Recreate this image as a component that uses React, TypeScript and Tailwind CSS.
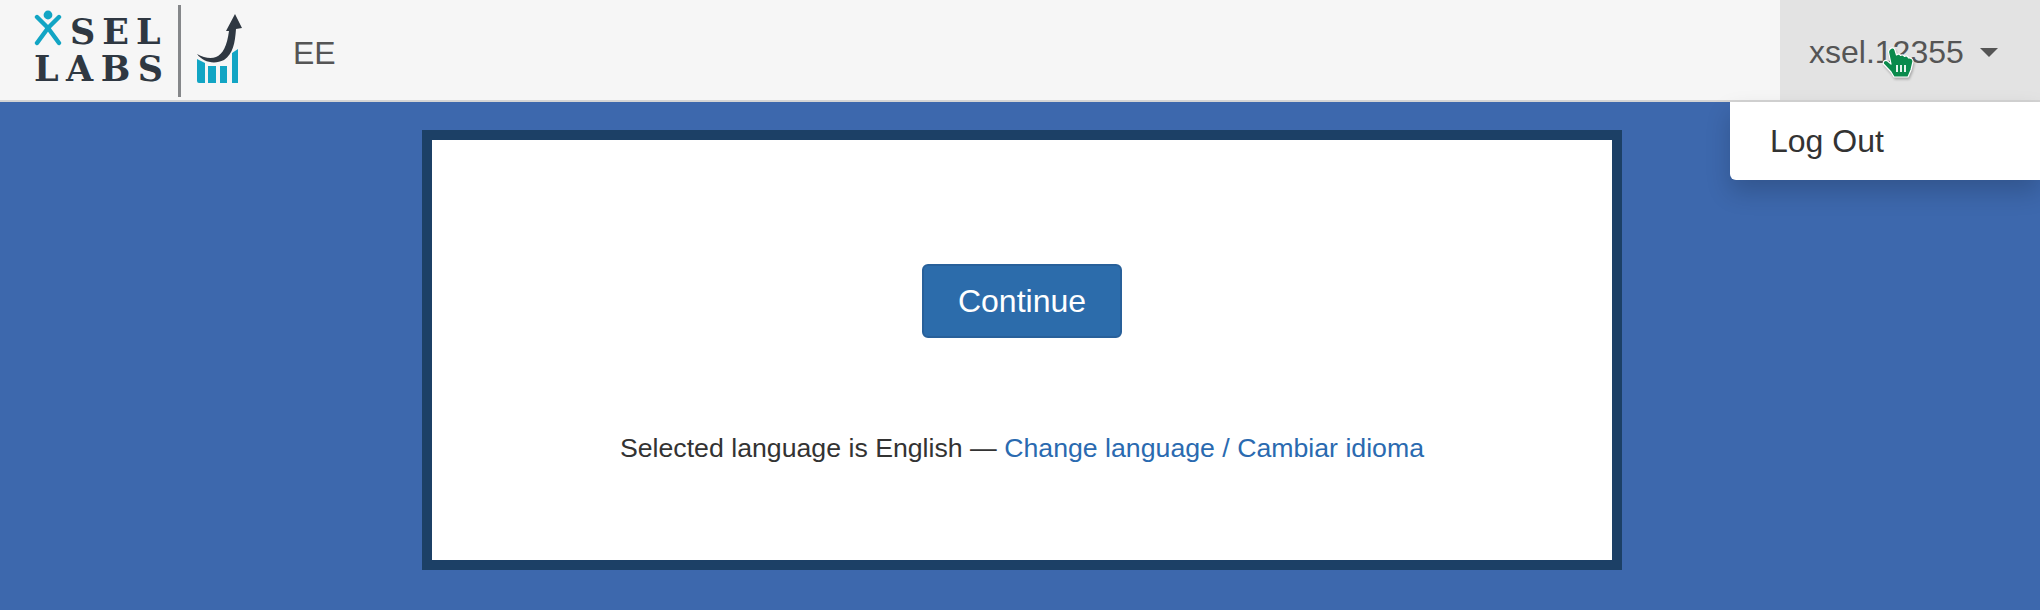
import React from "react";

const sans = "font-['Liberation_Sans',Arial,sans-serif]";

const Logo = () => (
  <div className="flex items-center h-full">
    <div className="flex flex-col w-[144px] ml-[34px] text-[#2f3842] font-['DejaVu_Serif',serif]">
      <div className="flex items-center h-[38px]">
        {/* little figure that doubles as the X */}
        <svg width="28" height="36" viewBox="0 0 28 36" className="mr-[8px] -mt-[7px] shrink-0">
          <circle cx="14" cy="5" r="4.4" fill="#12a5c4" />
          <path d="M3 7 L14 18 L25 7 M14 18 L3 33 M14 18 L25 33" fill="none" stroke="#12a5c4" strokeWidth="4.4" strokeLinecap="round" strokeLinejoin="round" />
        </svg>
        <span className="text-[35px] leading-none tracking-[7px] font-bold">SEL</span>
      </div>
      <span className="text-[35px] leading-[38px] tracking-[7.5px] font-bold">LABS</span>
    </div>
    <div className="w-[3px] h-[92px] bg-[#85878a] mt-[2px]" />
    <svg width="46" height="72" viewBox="0 0 46 72" className="ml-[16px] -mt-[3px]">
      <path d="M0 46 V68 a2 2 0 0 0 2 2 H8 V50 Z M11 53 V70 H19 V53 Z M23 53 V70 H30 V53 Z M35 40 V70 H41 V36 Z" fill="#12a5c4" />
      <path
        d="M0 41 C7 45 14 46 19 44 C26 41 30 33 32 18 L29 18 L38 1 L45 15 L39 16 C38 30 36 41 27 47 C17 52 6 49 0 41Z"
        fill="#2f3842"
        stroke="#f6f6f6"
        strokeWidth="2.5"
        paintOrder="stroke"
      />
    </svg>
  </div>
);

const HandCursor = () => (
  <svg width="32" height="32" viewBox="0 0 32 32" className="absolute left-[102px] top-[46px] drop-shadow-[1px_2px_1px_rgba(0,0,0,0.25)]">
    <path
      d="M8 3 C10 1 12.5 2 13 4 L14.5 9 C16 7.5 18 8 18.5 9.5 C20 8.5 22 9 22.5 10.5 C24 9.5 26 10 26.5 12 C28.5 11.5 31 13 31 15.5 L29 24 L26 31 L12 31 L9 26 L1.5 18 C0.5 15.5 3 13.5 5.5 15 L9 18 L6.5 6 C6.5 5 7 4 8 3Z"
      fill="#0a8a4c"
      stroke="#ffffff"
      strokeWidth="1.2"
      strokeLinejoin="round"
    />
    <path d="M15 19 V26 M19 19 V26 M23 19 V26" stroke="#ffffff" strokeWidth="1.8" fill="none" />
  </svg>
);

export default function App() {
  return (
    <div className={`h-[610px] overflow-hidden bg-[#3d68ad] ${sans}`}>
      <nav className="relative z-10 flex justify-between h-[102px] bg-[#f6f6f6] border-b-2 border-[#d4d4d4]">
        <div className="flex items-center">
          <Logo />
          <a className="ml-[50px] pt-[5px] text-[32px] text-[#555555]">EE</a>
        </div>
        <div className="relative flex items-center w-[260px] pl-[29px] pt-[4px] bg-[#e3e3e3] text-[32px] text-[#555555]">
          <span>xsel.12355</span>
          <span className="ml-[16px] w-0 h-0 border-x-[9px] border-t-[9px] border-x-transparent border-t-[#555555]" />
          <HandCursor />
        </div>
      </nav>

      {/* dropdown is open */}
      <div className="absolute z-20 left-[1730px] top-[102px] w-[310px] h-[78px] bg-white rounded-bl-[6px] shadow-[0_12px_24px_rgba(0,0,0,0.18)] flex items-center pl-[40px] text-[32px] text-[#333333]">
        Log Out
      </div>

      <main className="pt-[28px] pl-[422px]">
        <div className="w-[1200px] h-[440px] bg-white border-[10px] border-[#1c4066] flex flex-col items-center">
          <button className="mt-[124px] w-[200px] h-[74px] rounded-[6px] bg-[#2c6cab] border-2 border-[#28609a] text-[32px] text-white">
            Continue
          </button>
          <p className="mt-[90px] text-[26.7px] leading-[40px] text-[#333333]">
            Selected language is English — <a className="text-[#2a6ab0]">Change language / Cambiar idioma</a>
          </p>
        </div>
      </main>
    </div>
  );
}
